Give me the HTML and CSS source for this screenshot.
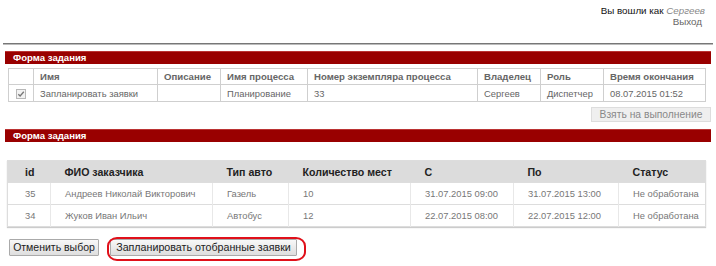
FILE: index.html
```html
<!DOCTYPE html>
<html lang="ru">
<head>
<meta charset="utf-8">
<link rel="stylesheet" href="styles.css">
</head>
<body>
<div class="page">
  <div class="userbox">
    <div>Вы вошли как <span class="uname">Сергеев</span></div>
    <div class="logout">Выход</div>
  </div>
  <div class="rule"></div>

  <div class="bar">Форма задания</div>
  <table class="t1">
    <colgroup>
      <col class="c1"><col class="c2"><col class="c3"><col class="c4"><col class="c5"><col class="c6"><col class="c7"><col class="c8">
    </colgroup>
    <tr>
      <th></th><th>Имя</th><th>Описание</th><th>Имя процесса</th><th>Номер экземпляра процесса</th><th>Владелец</th><th>Роль</th><th>Время окончания</th>
    </tr>
    <tr>
      <td class="cb"><svg width="10" height="10" viewBox="0 0 10 10"><rect x="0.5" y="0.5" width="9" height="9" fill="#f2f2f2" stroke="#b8b8b8"/><path d="M2.3 5.2 L4.1 7 L7.8 2.8" fill="none" stroke="#777" stroke-width="1.3"/></svg></td>
      <td>Запланировать заявки</td><td></td><td>Планирование</td><td>33</td><td>Сергеев</td><td>Диспетчер</td><td>08.07.2015 01:52</td>
    </tr>
  </table>
  <div class="actions"><span class="btn-dis">Взять на выполнение</span></div>

  <div class="bar bar2">Форма задания</div>
  <table class="t2">
    <colgroup>
      <col class="d1"><col class="d2"><col class="d3"><col class="d4"><col class="d5"><col class="d6"><col class="d7">
    </colgroup>
    <tr>
      <th>id</th><th>ФИО заказчика</th><th>Тип авто</th><th>Количество мест</th><th>С</th><th>По</th><th>Статус</th>
    </tr>
    <tr>
      <td>35</td><td>Андреев Николай Викторович</td><td>Газель</td><td>10</td><td>31.07.2015 09:00</td><td>31.07.2015 13:00</td><td>Не обработана</td>
    </tr>
    <tr>
      <td>34</td><td>Жуков Иван Ильич</td><td>Автобус</td><td>12</td><td>22.07.2015 08:00</td><td>22.07.2015 12:00</td><td>Не обработана</td>
    </tr>
  </table>

  <div class="btns">
    <span class="btn btn-cancel">Отменить выбор</span>
    <span class="btn btn-mark">Запланировать отобранные заявки</span>
  </div>
  <div class="rule rule-bottom"></div>
</div>
</body>
</html>
```

FILE: styles.css
```css
* { box-sizing: border-box; }
html, body { margin: 0; padding: 0; background: #fff; }
body {
  font-family: "Liberation Sans", Arial, sans-serif;
  font-size: 10px;
  color: #333;
  width: 716px;
  height: 266px;
  overflow: hidden;
}
.page { width: 716px; }

.userbox {
  text-align: right;
  padding: 5px 11px 0 0;
  line-height: 11px;
  color: #111;
  font-size: 9.8px;
}
.uname { color: #888; font-style: italic; }
.logout { color: #666; padding-right: 3px; }

.rule {
  margin: 16px 3px 0 3px;
  height: 2px;
  border-top: 1px solid #777;
  border-bottom: 1px solid #bbb;
}
.rule-bottom { margin-top: 10px; }

.bar {
  margin: 6px 5px 0 5px;
  height: 13px;
  background: #990000;
  border-top: 1px solid #b33;
  color: #fff;
  font-weight: bold;
  font-size: 9.6px;
  line-height: 12px;
  padding-left: 8px;
}
.bar2 { margin-top: 8px; }

table { border-collapse: collapse; table-layout: fixed; }

.t1 {
  margin: 4px 0 0 8px;
  width: 697px;
  color: #666;
}
.t1 th, .t1 td {
  border: 1px solid #cfcfcf;
  height: 17px;
  padding: 0 0 0 6px;
  text-align: left;
  font-size: 9.4px;
  white-space: nowrap;
  overflow: hidden;
}
.t1 th { font-weight: bold; color: #666; height: 16px; font-size: 9.6px; }
.t1 td.cb { padding: 2px 0 0 7px; }
.t1 td.cb svg { display: block; }
.c1 { width: 25px; } .c2 { width: 124px; } .c3 { width: 63px; } .c4 { width: 87px; }
.c5 { width: 170px; } .c6 { width: 63px; } .c7 { width: 63px; } .c8 { width: 102px; }

.actions {
  margin-top: 5px;
  text-align: right;
  padding-right: 5px;
  height: 14px;
}
.btn-dis {
  display: inline-block;
  width: 120px;
  height: 15px;
  line-height: 13px;
  background: #efefef;
  border: 1px solid #ddd;
  color: #888;
  text-align: center;
  font-size: 10.3px;
}

.t2 {
  margin: 18px 0 0 7px;
  width: 698px;
  color: #777;
  border: 1px solid #ddd;
  box-shadow: 0 1px 1px #ccc;
}
.t2 th {
  background: #dcdcdc;
  color: #222;
  font-weight: bold;
  font-size: 10.6px;
  height: 22px;
  text-align: left;
  padding: 0 0 0 14px;
  white-space: nowrap;
}
.t2 td {
  height: 22px;
  font-size: 9.4px;
  padding: 0 0 0 14px;
  border-left: 1px solid #e8e8e8;
  border-top: 1px solid #ddd;
  white-space: nowrap;
}
.t2 td:first-child { border-left: none; }
.t2 th:first-child, .t2 td:first-child { padding-left: 17px; }
.d1 { width: 43px; } .d2 { width: 162px; } .d3 { width: 76px; } .d4 { width: 122px; }
.d5 { width: 103px; } .d6 { width: 105px; } .d7 { width: 87px; }

.btns {
  margin: 12px 0 0 9px;
  display: flex;
  gap: 11px;
  height: 17px;
}
.btn {
  display: inline-block;
  height: 17px;
  line-height: 15px;
  padding: 0;
  font-size: 10.5px;
  color: #222;
  border: 1px solid #aaa;
  border-radius: 1px;
  background: linear-gradient(#f8f8f8, #dedede);
  white-space: nowrap;
  text-align: center;
}
.btn-cancel { width: 90px; }
.btn-mark { position: relative; width: 187px; font-size: 10.7px; }
.btn-mark::after {
  content: "";
  position: absolute;
  left: -4px; right: -10px; top: -3px; bottom: -6px;
  border: 2px solid #e0101a;
  border-radius: 10px / 9px;
}
```
